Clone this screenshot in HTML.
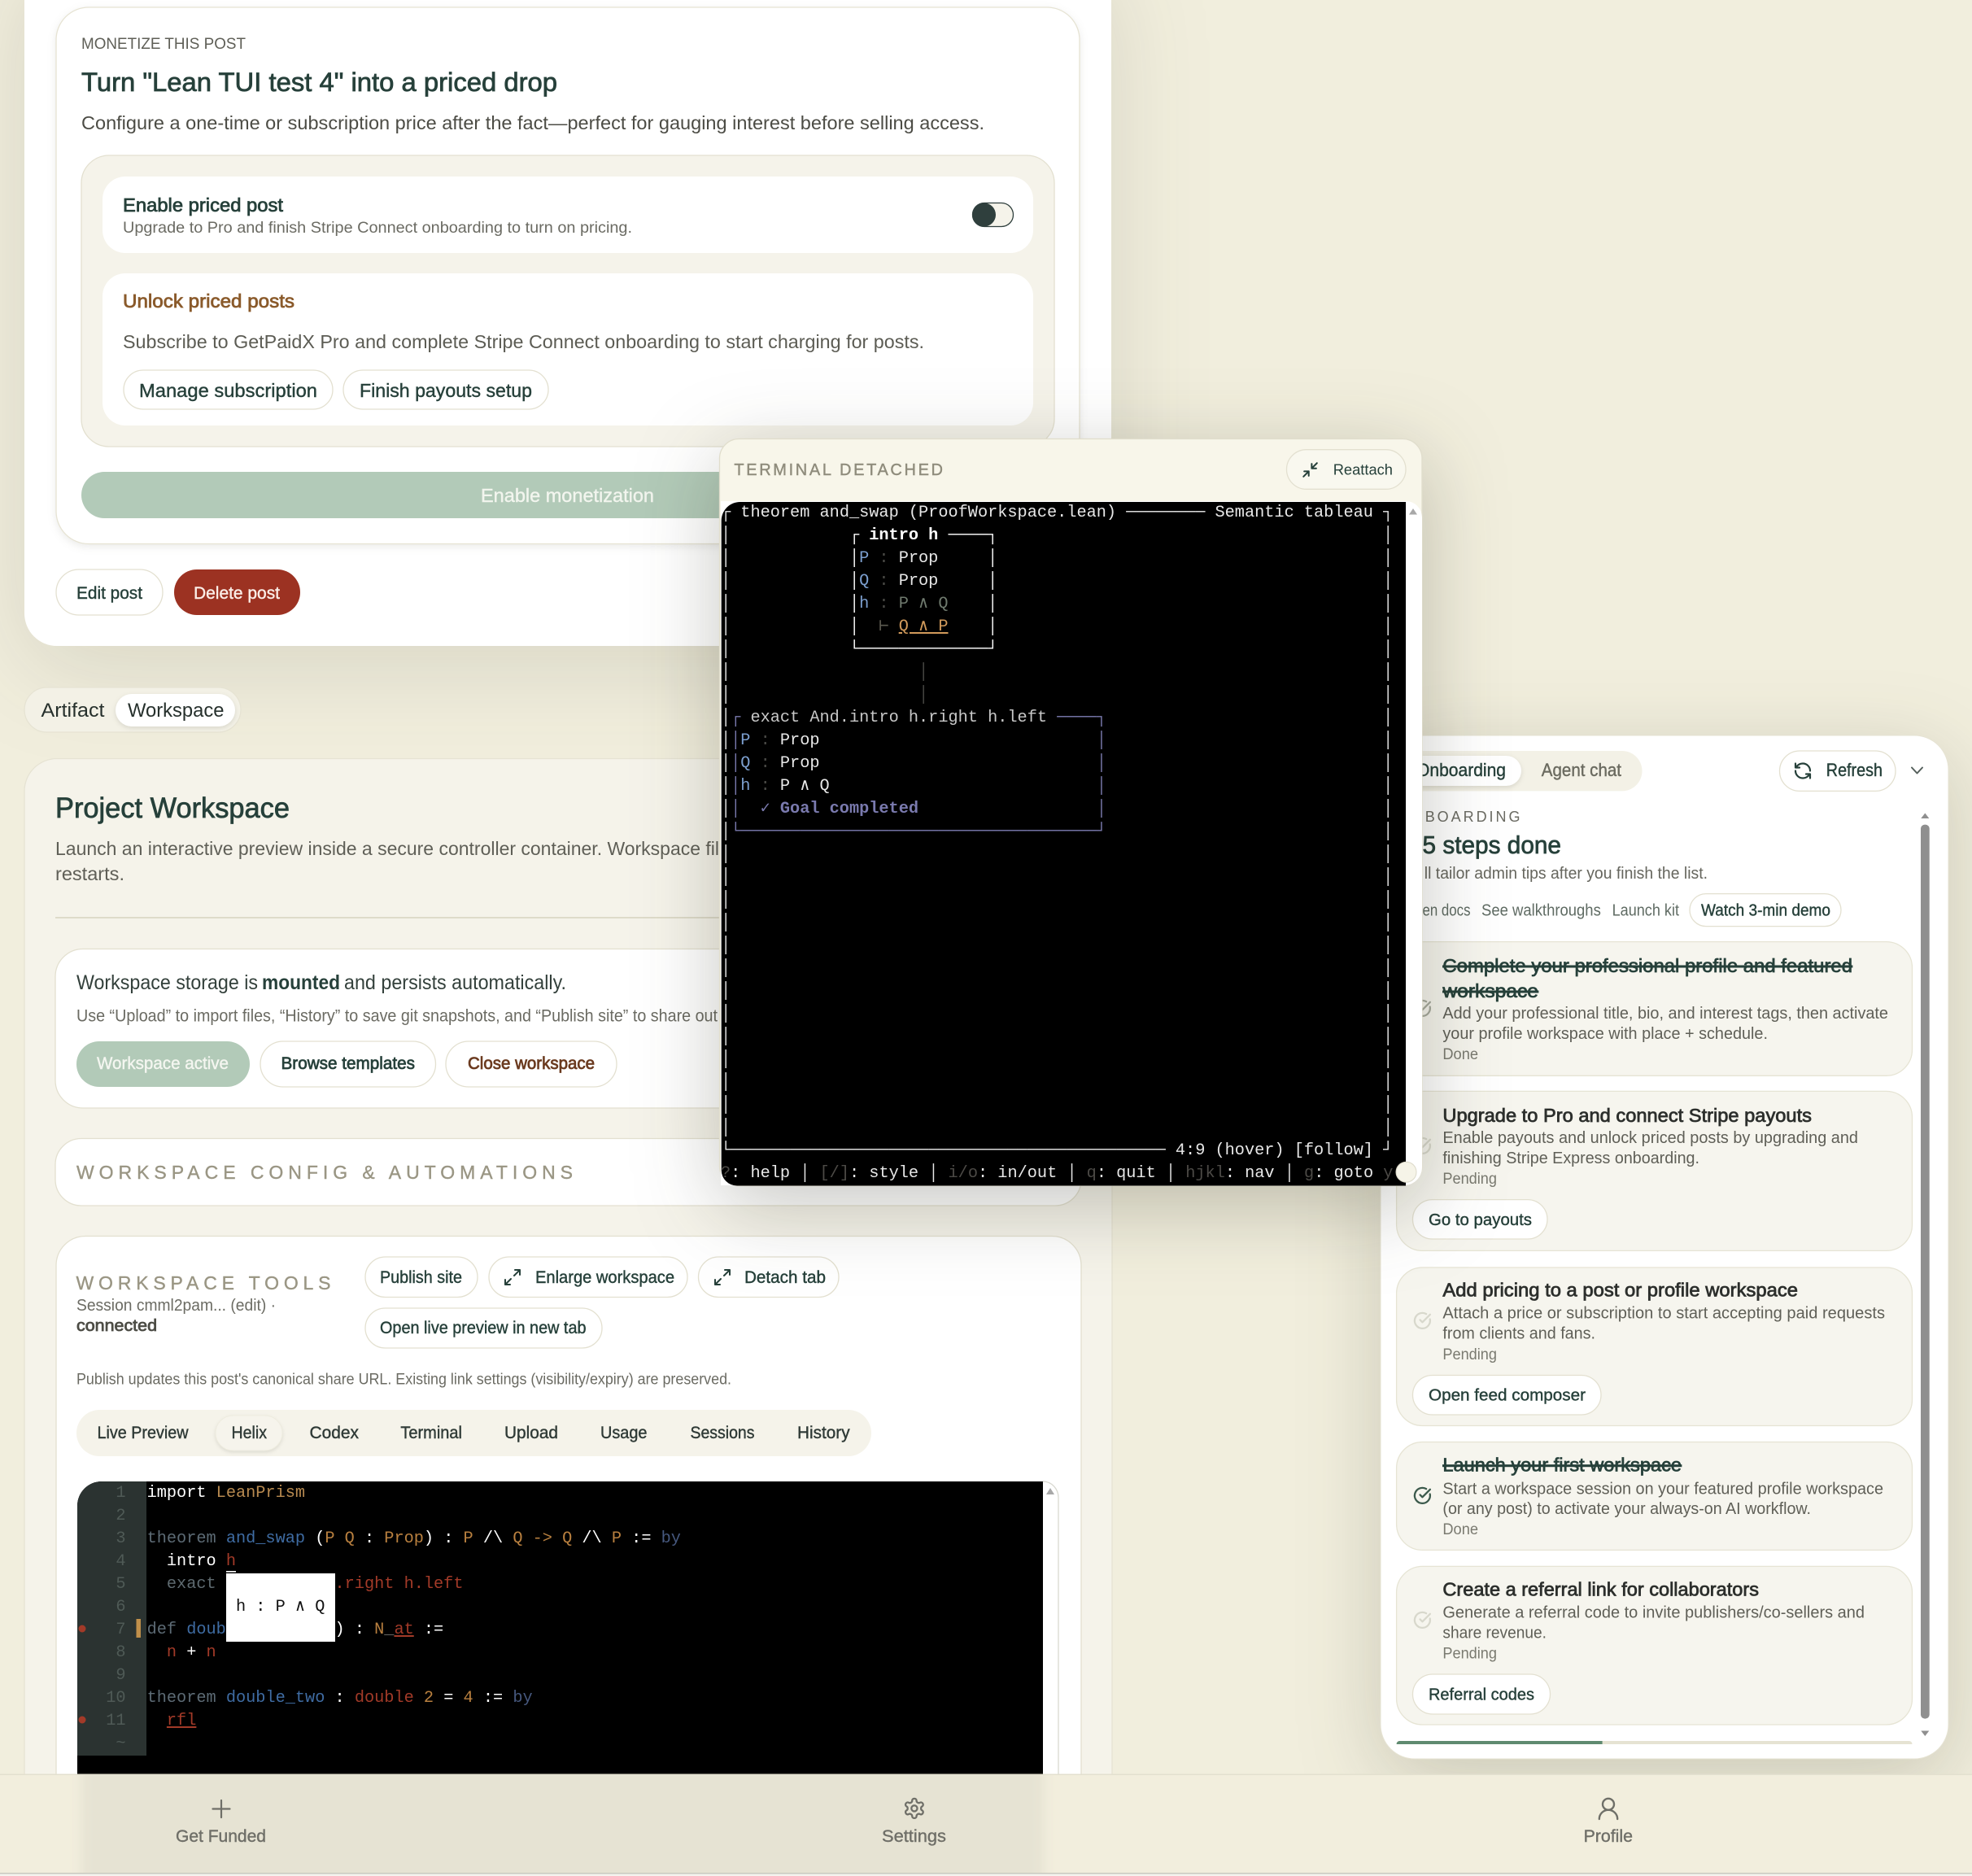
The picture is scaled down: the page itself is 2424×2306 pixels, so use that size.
<!DOCTYPE html>
<html lang="en"><head><meta charset="utf-8"><title>Project Workspace</title>
<style>
html,body{margin:0;padding:0;background:#f1eedd;width:2424px;height:2306px;overflow:hidden}
svg{display:block}
text{font-family:"Liberation Sans","DejaVu Sans",sans-serif;white-space:pre}
.m{stroke:currentColor;stroke-width:.4px}
.s{stroke:currentColor;stroke-width:.75px}
.g{color:#26403a;fill:#26403a}
.t,.t text,text.t{font-family:"Liberation Mono","DejaVu Sans Mono",monospace;font-size:20.25px;fill:#e8e8e8}
.w{fill:#fff}.o{fill:#b9803f}.y{fill:#b88a50}.b{fill:#3f6ca3}.r{fill:#a23a28}.k{fill:#5d6b75}.u{fill:#46587e}.e{fill:#5e6a70}
.l{fill:#7c9fcf}.d{fill:#4a4a46}.pu{fill:#7a7aae}.dim{fill:#4c4a46}
.ic{fill:none;stroke-linecap:round;stroke-linejoin:round}
.btn{fill:#fff;stroke:#e3e0d0;stroke-width:1.3}
.card{fill:#f6f5ee;stroke:#e6e4d4;stroke-width:1.3}
</style></head><body>
<svg xmlns="http://www.w3.org/2000/svg" width="2424" height="2306" viewBox="0 0 2424 2306">
<defs>
<clipPath id="nc"><rect x="0" y="2182" width="2424" height="120"/></clipPath>
<clipPath id="ec"><path d="M95 1851a30 30 0 0 1 30-30H1282V2190H95z"/></clipPath>
<clipPath id="tc"><path d="M886.7 640a23 23 0 0 1 23-23H1728V1457.5H906a19.3 19.3 0 0 1-19.3-19.3z"/></clipPath>
</defs>

<rect width="2424" height="2306" fill="#f1eedd"/>

<!-- post card -->
<rect x="30" y="-60" width="1336" height="854" rx="40" fill="#fff" style="filter:drop-shadow(0 26px 60px rgba(50,50,30,.13))"/>
<rect x="69" y="9" width="1258" height="659.5" rx="40" fill="#fff" stroke="#e6e3d3" stroke-width="1.3" style="filter:drop-shadow(0 3px 5px rgba(60,60,40,.1))"/>
<text x="100" y="60" font-size="19.5" fill="#5f5f57" textLength="202" lengthAdjust="spacingAndGlyphs">MONETIZE THIS POST</text>
<text x="100" y="112" font-size="32" class="s g" textLength="585" lengthAdjust="spacingAndGlyphs">Turn "Lean TUI test 4" into a priced drop</text>
<text x="100" y="159" font-size="23" fill="#4c4c45" textLength="1110" lengthAdjust="spacingAndGlyphs">Configure a one-time or subscription price after the fact—perfect for gauging interest before selling access.</text>
<rect x="100" y="191" width="1196" height="358" rx="34" fill="#f5f3ea" stroke="#e3e0d0" stroke-width="1.3"/>
<rect x="126" y="217" width="1144" height="94" rx="28" fill="#fff"/>
<text x="151" y="260" font-size="23" class="s g" textLength="197" lengthAdjust="spacingAndGlyphs">Enable priced post</text>
<text x="151" y="286" font-size="19.5" fill="#6b6b63" textLength="626" lengthAdjust="spacingAndGlyphs">Upgrade to Pro and finish Stripe Connect onboarding to turn on pricing.</text>
<rect x="1195.5" y="249.5" width="50" height="29" rx="14.5" fill="#f5f3ea" stroke="#2f3f3d" stroke-width="1.3"/>
<circle cx="1209.5" cy="264" r="14.5" fill="#2f3f3d"/>
<rect x="126" y="336" width="1144" height="187" rx="28" fill="#fff"/>
<text x="151" y="378" font-size="23" fill="#8a5a2b" style="color:#8a5a2b" class="s" textLength="211" lengthAdjust="spacingAndGlyphs">Unlock priced posts</text>
<text x="151" y="428" font-size="23" fill="#5c5c54" textLength="985" lengthAdjust="spacingAndGlyphs">Subscribe to GetPaidX Pro and complete Stripe Connect onboarding to start charging for posts.</text>
<rect x="152" y="455" width="257" height="48" rx="24" class="btn"/>
<text x="171" y="488" font-size="23" class="m g" textLength="219" lengthAdjust="spacingAndGlyphs">Manage subscription</text>
<rect x="422" y="455" width="252" height="48" rx="24" class="btn"/>
<text x="442" y="488" font-size="23" class="m g" textLength="212" lengthAdjust="spacingAndGlyphs">Finish payouts setup</text>
<rect x="100" y="580" width="1196" height="57" rx="28.5" fill="#b2cab8"/>
<text x="591" y="617" font-size="23" fill="#f2f5ee" style="color:#f2f5ee" class="m" textLength="213" lengthAdjust="spacingAndGlyphs">Enable monetization</text>
<rect x="69" y="700" width="131" height="56" rx="28" class="btn"/>
<text x="94" y="736" font-size="21" class="m g" textLength="81" lengthAdjust="spacingAndGlyphs">Edit post</text>
<rect x="214" y="700" width="155" height="56" rx="28" fill="#9c3222"/>
<text x="238" y="736" font-size="21" fill="#fbeee8" style="color:#fbeee8" class="m" textLength="106" lengthAdjust="spacingAndGlyphs">Delete post</text>

<!-- artifact / workspace tabs -->
<rect x="30" y="845" width="266" height="55" rx="27.5" fill="#f3f1e6" stroke="#e6e3d3" stroke-width="1.3"/>
<rect x="142" y="853" width="147" height="40" rx="20" fill="#fff" style="filter:drop-shadow(0 2px 3px rgba(60,60,40,.14))"/>
<text x="50.5" y="881" font-size="24" fill="#26302c" textLength="78" lengthAdjust="spacingAndGlyphs">Artifact</text>
<text x="157" y="881" font-size="24" fill="#26302c" textLength="118.5" lengthAdjust="spacingAndGlyphs">Workspace</text>

<!-- workspace card -->
<rect x="30" y="932.5" width="1337" height="1400" rx="40" fill="#f5f3ea" stroke="#e6e3d3" stroke-width="1.3"/>
<text x="68" y="1005" font-size="35" class="s g" textLength="288" lengthAdjust="spacingAndGlyphs">Project Workspace</text>
<text x="68" y="1051" font-size="23.5" fill="#5f5f57" textLength="816" lengthAdjust="spacingAndGlyphs">Launch an interactive preview inside a secure controller container. Workspace fil</text>
<text x="68" y="1082" font-size="23.5" fill="#5f5f57" textLength="85" lengthAdjust="spacingAndGlyphs">restarts.</text>
<rect x="68" y="1127" width="1261" height="2" fill="#dedbca"/>

<rect x="68" y="1166.5" width="1261" height="195.5" rx="34" fill="#fff" stroke="#e3e0d0" stroke-width="1.3"/>
<text x="94" y="1216" font-size="25" fill="#33403b" textLength="223" lengthAdjust="spacingAndGlyphs">Workspace storage is</text>
<text x="322" y="1216" font-size="25" font-weight="700" class="g" textLength="96" lengthAdjust="spacingAndGlyphs">mounted</text>
<text x="423" y="1216" font-size="25" fill="#33403b" textLength="273" lengthAdjust="spacingAndGlyphs">and persists automatically.</text>
<text x="94" y="1255.5" font-size="21" fill="#6b6b63" textLength="788" lengthAdjust="spacingAndGlyphs">Use “Upload” to import files, “History” to save git snapshots, and “Publish site” to share out</text>
<rect x="94" y="1280" width="213" height="56" rx="28" fill="#b2cab8"/>
<text x="119" y="1314" font-size="21.5" fill="#f4f6f0" style="color:#f4f6f0" class="m" textLength="162" lengthAdjust="spacingAndGlyphs">Workspace active</text>
<rect x="320" y="1280" width="215.5" height="56" rx="28" class="btn"/>
<text x="345.5" y="1314" font-size="21.5" class="s g" textLength="164.5" lengthAdjust="spacingAndGlyphs">Browse templates</text>
<rect x="548" y="1280" width="210" height="56" rx="28" class="btn"/>
<text x="575" y="1314" font-size="21.5" fill="#6b3a1f" style="color:#6b3a1f" class="s" textLength="156" lengthAdjust="spacingAndGlyphs">Close workspace</text>

<rect x="68" y="1399.5" width="1261" height="82.5" rx="32" fill="#fff" stroke="#e3e0d0" stroke-width="1.3"/>
<text x="94" y="1449" font-size="23" fill="#9a9684" style="color:#9a9684" class="m" textLength="610" lengthAdjust="spacing">WORKSPACE CONFIG &amp; AUTOMATIONS</text>

<!-- tools card -->
<rect x="69" y="1519.5" width="1260" height="800" rx="36" fill="#fff" stroke="#e3e0d0" stroke-width="1.3"/>
<text x="93.5" y="1585" font-size="23" fill="#9a9684" style="color:#9a9684" class="m" textLength="313" lengthAdjust="spacing">WORKSPACE TOOLS</text>
<text x="94" y="1611" font-size="20" fill="#6b6b63" textLength="245" lengthAdjust="spacingAndGlyphs">Session cmml2pam... (edit) ·</text>
<text x="94" y="1636" font-size="20" fill="#4c4c45" style="color:#4c4c45" class="s" textLength="99" lengthAdjust="spacingAndGlyphs">connected</text>
<rect x="449" y="1545" width="138" height="49.5" rx="24.7" class="btn"/>
<text x="467" y="1577" font-size="21" class="m g" textLength="101" lengthAdjust="spacingAndGlyphs">Publish site</text>
<rect x="601" y="1545" width="244" height="49.5" rx="24.7" class="btn"/>
<g transform="translate(618,1558)" class="ic" stroke="#26403a" stroke-width="2"><path d="M15 3h6v6M21 3l-7 7M3 21l7-7M9 21H3v-6"/></g>
<text x="658" y="1577" font-size="21" class="m g" textLength="171" lengthAdjust="spacingAndGlyphs">Enlarge workspace</text>
<rect x="858.5" y="1545" width="172.5" height="49.5" rx="24.7" class="btn"/>
<g transform="translate(876,1558)" class="ic" stroke="#26403a" stroke-width="2"><path d="M15 3h6v6M21 3l-7 7M3 21l7-7M9 21H3v-6"/></g>
<text x="915" y="1577" font-size="21" class="m g" textLength="100" lengthAdjust="spacingAndGlyphs">Detach tab</text>
<rect x="449" y="1608" width="291" height="49" rx="24.5" class="btn"/>
<text x="467" y="1639" font-size="21" class="m g" textLength="253.5" lengthAdjust="spacingAndGlyphs">Open live preview in new tab</text>
<text x="94" y="1701.5" font-size="19" fill="#6b6b63" textLength="805" lengthAdjust="spacingAndGlyphs">Publish updates this post's canonical share URL. Existing link settings (visibility/expiry) are preserved.</text>

<rect x="94" y="1733" width="977" height="57" rx="28.5" fill="#f5f3ea"/>
<rect x="265" y="1740" width="82" height="43" rx="21.5" fill="#f6f4ec" stroke="#eeecdf" style="filter:drop-shadow(0 2px 2px rgba(60,60,40,.12))"/>
<g font-size="21" fill="#2f3a36" style="color:#2f3a36">
<text class="m" x="119.5" y="1768" textLength="112" lengthAdjust="spacingAndGlyphs">Live Preview</text>
<text class="m" x="284.5" y="1768" textLength="43.5" lengthAdjust="spacingAndGlyphs">Helix</text>
<text class="m" x="380.5" y="1768" textLength="60.5" lengthAdjust="spacingAndGlyphs">Codex</text>
<text class="m" x="492.4" y="1768" textLength="75.6" lengthAdjust="spacingAndGlyphs">Terminal</text>
<text class="m" x="620" y="1768" textLength="66" lengthAdjust="spacingAndGlyphs">Upload</text>
<text class="m" x="738" y="1768" textLength="57.5" lengthAdjust="spacingAndGlyphs">Usage</text>
<text class="m" x="848.5" y="1768" textLength="79" lengthAdjust="spacingAndGlyphs">Sessions</text>
<text class="m" x="980" y="1768" textLength="64.6" lengthAdjust="spacingAndGlyphs">History</text>
</g>

<!-- editor -->
<path d="M1282 1821a19 20 0 0 1 19 20V2190" fill="#fff" stroke="#d8d8d0" stroke-width="1.3"/>
<path d="M1291 1829l5 8h-10z" fill="#a8a8a8"/>
<g clip-path="url(#ec)">
<rect x="95" y="1821" width="1187" height="369" fill="#000"/>
<rect x="95" y="1821" width="85" height="337" fill="#2b3331"/>
<g text-anchor="end">
<text class="t" x="154.5" y="1840" style="fill:#4f5a56">1</text>
<text class="t" x="154.5" y="1868" style="fill:#4f5a56">2</text>
<text class="t" x="154.5" y="1896" style="fill:#4f5a56">3</text>
<text class="t" x="154.5" y="1924" style="fill:#4f5a56">4</text>
<text class="t" x="154.5" y="1952" style="fill:#4f5a56">5</text>
<text class="t" x="154.5" y="1980" style="fill:#4f5a56">6</text>
<text class="t" x="154.5" y="2008" style="fill:#4f5a56">7</text>
<text class="t" x="154.5" y="2036" style="fill:#4f5a56">8</text>
<text class="t" x="154.5" y="2064" style="fill:#4f5a56">9</text>
<text class="t" x="154.5" y="2092" style="fill:#4f5a56">10</text>
<text class="t" x="154.5" y="2120" style="fill:#4f5a56">11</text>
<text class="t" x="154.5" y="2148" style="fill:#4f5a56">~</text>
</g>
<circle cx="101" cy="2002" r="4.5" fill="#a23a28"/>
<circle cx="101" cy="2114" r="4.5" fill="#a23a28"/>
<rect x="167.5" y="1990" width="5.5" height="23" fill="#c08f4a"/>
<g>
<text class="t" x="180.6" y="1840"><tspan class="w">import</tspan> <tspan class="y">LeanPrism</tspan></text>
<text class="t" x="180.6" y="1896"><tspan class="k">theorem</tspan> <tspan class="b">and_swap</tspan> <tspan class="w">(</tspan><tspan class="o">P Q</tspan> <tspan class="w">:</tspan> <tspan class="o">Prop</tspan><tspan class="w">) :</tspan> <tspan class="o">P</tspan> <tspan class="w">/\</tspan> <tspan class="o">Q -&gt; Q</tspan> <tspan class="w">/\</tspan> <tspan class="o">P</tspan> <tspan class="w">:=</tspan> <tspan class="u">by</tspan></text>
<text class="t" x="180.6" y="1924">  <tspan class="w">intro</tspan> <tspan class="r">h</tspan></text>
<text class="t" x="180.6" y="1952">  <tspan class="e">exact</tspan> <tspan class="r">And.intro h.right h.left</tspan></text>
<text class="t" x="180.6" y="2008"><tspan class="k">def</tspan> <tspan class="b">double</tspan> <tspan class="w">(n : Nat) :</tspan> <tspan class="o">N</tspan><tspan style="fill:#6a6a66">_</tspan><tspan class="r" text-decoration="underline">at</tspan> <tspan class="w">:=</tspan></text>
<text class="t" x="180.6" y="2036">  <tspan class="r">n</tspan> <tspan class="w">+</tspan> <tspan class="r">n</tspan></text>
<text class="t" x="180.6" y="2092"><tspan class="k">theorem</tspan> <tspan class="b">double_two</tspan> <tspan class="w">:</tspan> <tspan class="r">double</tspan> <tspan class="o">2</tspan> <tspan class="w">=</tspan> <tspan class="o">4</tspan> <tspan class="w">:=</tspan> <tspan class="u">by</tspan></text>
<text class="t" x="180.6" y="2120">  <tspan class="r" text-decoration="underline">rfl</tspan></text>
</g>
<rect x="278" y="1931" width="12" height="1.6" fill="#fff"/>
<rect x="278" y="1934" width="134" height="84" fill="#fff"/>
<text class="t" x="290" y="1980" style="fill:#111">h : P ∧ Q</text>
</g>

<!-- right panel -->
<rect x="1697" y="904" width="698" height="1258" rx="42" fill="#fff" stroke="#e6e3d3" stroke-width="1" style="filter:drop-shadow(0 24px 50px rgba(50,50,30,.2))"/>
<rect x="1700" y="923" width="318.5" height="49.4" rx="24.7" fill="#f3f1e6"/>
<rect x="1720" y="929" width="150" height="37" rx="18.5" fill="#fff" style="filter:drop-shadow(0 2px 3px rgba(60,60,40,.14))"/>
<text x="1741" y="954" font-size="22" class="m g" textLength="110" lengthAdjust="spacingAndGlyphs">Onboarding</text>
<text x="1894.8" y="954" font-size="22" fill="#6b6b60" style="color:#6b6b60" class="m" textLength="98.2" lengthAdjust="spacingAndGlyphs">Agent chat</text>
<rect x="2187.5" y="923" width="142.5" height="49.4" rx="24.7" class="btn"/>
<g transform="translate(2204,935.5)" class="ic" stroke="#26403a" stroke-width="2.2"><path d="M21 12a9 9 0 0 0-9-9 9.75 9.75 0 0 0-6.74 2.74L3 8M3 3v5h5M3 12a9 9 0 0 0 9 9 9.75 9.75 0 0 0 6.74-2.74L21 16M16 16h5v5"/></g>
<text x="2244.8" y="954" font-size="22" class="m g" textLength="69.2" lengthAdjust="spacingAndGlyphs">Refresh</text>
<path d="M2350 943.5l6.500 7 6.500-7" class="ic" stroke="#55605c" stroke-width="2"/>
<text x="1720" y="1010" font-size="18" fill="#6b6b63">ON</text>
<text x="1751.7" y="1010" font-size="18" fill="#6b6b63" textLength="116.8" lengthAdjust="spacing">BOARDING</text>
<text x="1748.5" y="1049" font-size="31" class="s g" textLength="170.5" lengthAdjust="spacingAndGlyphs">5 steps done</text>
<text x="1750.8" y="1080" font-size="20" fill="#66665e" textLength="348.2" lengthAdjust="spacingAndGlyphs">ll tailor admin tips after you finish the list.</text>
<text x="1748.5" y="1125.5" font-size="20" fill="#5f6b63" textLength="59" lengthAdjust="spacingAndGlyphs">en docs</text>
<text x="1821" y="1125.5" font-size="20" fill="#5f6b63" textLength="146.8" lengthAdjust="spacingAndGlyphs">See walkthroughs</text>
<text x="1981.6" y="1125.5" font-size="20" fill="#5f6b63" textLength="82.4" lengthAdjust="spacingAndGlyphs">Launch kit</text>
<rect x="2077" y="1098.6" width="186" height="40" rx="20" class="btn"/>
<text x="2091" y="1125.5" font-size="20" class="m g" textLength="159" lengthAdjust="spacingAndGlyphs">Watch 3-min demo</text>

<rect x="2361" y="1013.6" width="10.7" height="1099" rx="5" fill="#8f8f8f"/>
<path d="M2366.3 999.5l5 6.500h-10z" fill="#8f8f8f"/>
<path d="M2366.3 2134l5-6.500h-10z" fill="#8f8f8f"/>

<!-- card 1 -->
<rect x="1716.6" y="1157.6" width="633.9" height="164.7" rx="32" class="card"/>
<g transform="translate(1737,1228) scale(.95)" class="ic" stroke="#a8ab9e" stroke-width="2.4"><path d="M21.801 10A10 10 0 1 1 17 3.335M9 11l3 3L22 4"/></g>
<text x="1773.4" y="1195" font-size="23" class="s g" text-decoration="line-through" textLength="503.6" lengthAdjust="spacingAndGlyphs">Complete your professional profile and featured</text>
<text x="1773.4" y="1226" font-size="23" class="s g" text-decoration="line-through" textLength="117.6" lengthAdjust="spacingAndGlyphs">workspace</text>
<text x="1773.4" y="1252" font-size="20.5" fill="#5f5f57" textLength="547.6" lengthAdjust="spacingAndGlyphs">Add your professional title, bio, and interest tags, then activate</text>
<text x="1773.4" y="1277" font-size="20.5" fill="#5f5f57" textLength="399.6" lengthAdjust="spacingAndGlyphs">your profile workspace with place + schedule.</text>
<text x="1773.4" y="1302" font-size="19" fill="#7a7a70" textLength="43.6" lengthAdjust="spacingAndGlyphs">Done</text>

<!-- card 2 -->
<rect x="1716.6" y="1341.4" width="633.9" height="196" rx="32" class="card"/>
<g transform="translate(1737,1397) scale(.95)" class="ic" stroke="#d8d8cc" stroke-width="2.4"><path d="M21.801 10A10 10 0 1 1 17 3.335M9 11l3 3L22 4"/></g>
<text x="1773.4" y="1379" font-size="23" fill="#2c2f2c" style="color:#2c2f2c" class="s" textLength="453.6" lengthAdjust="spacingAndGlyphs">Upgrade to Pro and connect Stripe payouts</text>
<text x="1773.4" y="1405" font-size="20.5" fill="#5f5f57" textLength="510.6" lengthAdjust="spacingAndGlyphs">Enable payouts and unlock priced posts by upgrading and</text>
<text x="1773.4" y="1430" font-size="20.5" fill="#5f5f57" textLength="315.6" lengthAdjust="spacingAndGlyphs">finishing Stripe Express onboarding.</text>
<text x="1773.4" y="1455" font-size="19" fill="#7a7a70" textLength="66.6" lengthAdjust="spacingAndGlyphs">Pending</text>
<rect x="1736.5" y="1474.6" width="165.5" height="48.4" rx="24.2" class="btn"/>
<text x="1756" y="1506" font-size="20.5" class="m g" textLength="127" lengthAdjust="spacingAndGlyphs">Go to payouts</text>

<!-- card 3 -->
<rect x="1716.6" y="1558" width="633.9" height="194.5" rx="32" class="card"/>
<g transform="translate(1737,1612) scale(.95)" class="ic" stroke="#d8d8cc" stroke-width="2.4"><path d="M21.801 10A10 10 0 1 1 17 3.335M9 11l3 3L22 4"/></g>
<text x="1773.4" y="1593.7" font-size="23" fill="#2c2f2c" style="color:#2c2f2c" class="s" textLength="436.6" lengthAdjust="spacingAndGlyphs">Add pricing to a post or profile workspace</text>
<text x="1773.4" y="1620.6" font-size="20.5" fill="#5f5f57" textLength="543.6" lengthAdjust="spacingAndGlyphs">Attach a price or subscription to start accepting paid requests</text>
<text x="1773.4" y="1645.5" font-size="20.5" fill="#5f5f57" textLength="187.6" lengthAdjust="spacingAndGlyphs">from clients and fans.</text>
<text x="1773.4" y="1671" font-size="19" fill="#7a7a70" textLength="66.6" lengthAdjust="spacingAndGlyphs">Pending</text>
<rect x="1736.5" y="1690.5" width="231.5" height="48.5" rx="24.2" class="btn"/>
<text x="1756" y="1721.5" font-size="20.5" class="m g" textLength="193" lengthAdjust="spacingAndGlyphs">Open feed composer</text>

<!-- card 4 -->
<rect x="1716.6" y="1772.5" width="633.9" height="132.9" rx="32" class="card"/>
<g transform="translate(1737,1827) scale(.95)" class="ic" stroke="#3c5a4c" stroke-width="2.4"><path d="M21.801 10A10 10 0 1 1 17 3.335M9 11l3 3L22 4"/></g>
<text x="1773.4" y="1808.7" font-size="23" class="s g" text-decoration="line-through" textLength="293.6" lengthAdjust="spacingAndGlyphs">Launch your first workspace</text>
<text x="1773.4" y="1836.5" font-size="20.5" fill="#5f5f57" textLength="541.6" lengthAdjust="spacingAndGlyphs">Start a workspace session on your featured profile workspace</text>
<text x="1773.4" y="1861" font-size="20.5" fill="#5f5f57" textLength="452.6" lengthAdjust="spacingAndGlyphs">(or any post) to activate your always-on AI workflow.</text>
<text x="1773.4" y="1886" font-size="19" fill="#7a7a70" textLength="43.6" lengthAdjust="spacingAndGlyphs">Done</text>

<!-- card 5 -->
<rect x="1716.6" y="1925.4" width="633.9" height="194.6" rx="32" class="card"/>
<g transform="translate(1737,1980) scale(.95)" class="ic" stroke="#d8d8cc" stroke-width="2.4"><path d="M21.801 10A10 10 0 1 1 17 3.335M9 11l3 3L22 4"/></g>
<text x="1773.4" y="1961.6" font-size="23" fill="#2c2f2c" style="color:#2c2f2c" class="s" textLength="388.6" lengthAdjust="spacingAndGlyphs">Create a referral link for collaborators</text>
<text x="1773.4" y="1988.5" font-size="20.5" fill="#5f5f57" textLength="518.6" lengthAdjust="spacingAndGlyphs">Generate a referral code to invite publishers/co-sellers and</text>
<text x="1773.4" y="2013.4" font-size="20.5" fill="#5f5f57" textLength="127.6" lengthAdjust="spacingAndGlyphs">share revenue.</text>
<text x="1773.4" y="2038.3" font-size="19" fill="#7a7a70" textLength="66.6" lengthAdjust="spacingAndGlyphs">Pending</text>
<rect x="1736.5" y="2058" width="169" height="49" rx="24.5" class="btn"/>
<text x="1756" y="2089.6" font-size="20.5" class="m g" textLength="130" lengthAdjust="spacingAndGlyphs">Referral codes</text>

<path d="M1716.6 2144a4 4 0 0 1 4-4H2346.5a4 4 0 0 1 4 4z" fill="#e6e3d3"/>
<path d="M1716.6 2144a4 4 0 0 1 4-4H1969.6v4z" fill="#5f8a70"/>

<!-- detached terminal -->
<rect x="884.5" y="539.5" width="863.5" height="918" rx="24" fill="#f8f6ea" stroke="#e0ddcc" stroke-width="1.3" style="filter:drop-shadow(0 24px 50px rgba(40,40,25,.26))"/>
<text x="902.4" y="584" font-size="20" fill="#8f8c7c" style="color:#8f8c7c" class="m" textLength="256.6" lengthAdjust="spacing">TERMINAL DETACHED</text>
<rect x="1581.5" y="552.7" width="146.5" height="48.6" rx="24.3" fill="#f9f8ef" stroke="#e3e0d0" stroke-width="1.3"/>
<g transform="translate(1599.5,566.5) scale(.92)" class="ic" stroke="#26403a" stroke-width="2.2"><path d="M14 10l7-7M20 10h-6V4M3 21l7-7M4 14h6v6"/></g>
<text x="1638.7" y="583.4" font-size="18.5" class="g" textLength="73.3" lengthAdjust="spacingAndGlyphs">Reattach</text>
<path d="M886 616h842a20 20 0 0 1 20 20v799a22 22 0 0 1-22 22H886z" fill="#fff"/>
<path d="M1737 625l5 7.500h-10z" fill="#a8a8a8"/>
<g clip-path="url(#tc)">
<rect x="886" y="616" width="842" height="842" fill="#000"/>
<g>
<text class="t" y="635"><tspan x="886">┌</tspan><tspan x="910.3">theorem and_swap (ProofWorkspace.lean)</tspan><tspan x="1384.15">────────</tspan><tspan x="1493.5">Semantic tableau</tspan><tspan x="1700.05">┐</tspan></text>
<text class="t" y="663"><tspan x="886">│</tspan><tspan x="1043.95" class="w">┌</tspan><tspan x="1068.25" class="w" font-weight="700">intro h</tspan><tspan x="1165.45" class="w">────┐</tspan><tspan x="1700.05">│</tspan></text>
<text class="t" y="691"><tspan x="886">│</tspan><tspan x="1043.95" class="w">│</tspan><tspan x="1056.1" class="l">P</tspan><tspan x="1080.4" class="d">:</tspan><tspan x="1104.7">Prop</tspan><tspan x="1214.05" class="w">│</tspan><tspan x="1700.05">│</tspan></text>
<text class="t" y="719"><tspan x="886">│</tspan><tspan x="1043.95" class="w">│</tspan><tspan x="1056.1" class="l">Q</tspan><tspan x="1080.4" class="d">:</tspan><tspan x="1104.7">Prop</tspan><tspan x="1214.05" class="w">│</tspan><tspan x="1700.05">│</tspan></text>
<text class="t" y="747"><tspan x="886">│</tspan><tspan x="1043.95" class="w">│</tspan><tspan x="1056.1" class="l">h</tspan><tspan x="1080.4" class="d">:</tspan><tspan x="1104.7" style="fill:#6f7a6e">P ∧ Q</tspan><tspan x="1214.05" class="w">│</tspan><tspan x="1700.05">│</tspan></text>
<text class="t" y="775"><tspan x="886">│</tspan><tspan x="1043.95" class="w">│</tspan><tspan x="1080.4" style="fill:#5c5a50">⊢</tspan><tspan x="1104.7" style="fill:#d19a5b" text-decoration="underline">Q ∧ P</tspan><tspan x="1214.05" class="w">│</tspan><tspan x="1700.05">│</tspan></text>
<text class="t" y="803"><tspan x="886">│</tspan><tspan x="1043.95" class="w">└─────────────┘</tspan><tspan x="1700.05">│</tspan></text>
<text class="t" y="831"><tspan x="886">│</tspan><tspan x="1129" class="d">│</tspan><tspan x="1700.05">│</tspan></text>
<text class="t" y="859"><tspan x="886">│</tspan><tspan x="1129" class="d">│</tspan><tspan x="1700.05">│</tspan></text>
<text class="t" y="887"><tspan x="886">│</tspan><tspan x="898.15" class="pu">┌</tspan><tspan x="922.45" style="fill:#c8c8c8">exact And.intro h.right h.left</tspan><tspan x="1299.1" class="pu">────┐</tspan><tspan x="1700.05">│</tspan></text>
<text class="t" y="915"><tspan x="886">│</tspan><tspan x="898.15" class="pu">│</tspan><tspan x="910.3" class="l">P</tspan><tspan x="934.6" class="d">:</tspan><tspan x="958.9">Prop</tspan><tspan x="1347.7" class="pu">│</tspan><tspan x="1700.05">│</tspan></text>
<text class="t" y="943"><tspan x="886">│</tspan><tspan x="898.15" class="pu">│</tspan><tspan x="910.3" class="l">Q</tspan><tspan x="934.6" class="d">:</tspan><tspan x="958.9">Prop</tspan><tspan x="1347.7" class="pu">│</tspan><tspan x="1700.05">│</tspan></text>
<text class="t" y="971"><tspan x="886">│</tspan><tspan x="898.15" class="pu">│</tspan><tspan x="910.3" class="l">h</tspan><tspan x="934.6" class="d">:</tspan><tspan x="958.9">P ∧ Q</tspan><tspan x="1347.7" class="pu">│</tspan><tspan x="1700.05">│</tspan></text>
<text class="t" y="999"><tspan x="886">│</tspan><tspan x="898.15" class="pu">│</tspan><tspan x="934.6" class="pu">✓</tspan><tspan x="958.9" class="pu" font-weight="700">Goal completed</tspan><tspan x="1347.7" class="pu">│</tspan><tspan x="1700.05">│</tspan></text>
<text class="t" y="1027"><tspan x="886">│</tspan><tspan x="898.15" class="pu">└────────────────────────────────────┘</tspan><tspan x="1700.05">│</tspan></text>
<text class="t" y="1055"><tspan x="886">│</tspan><tspan x="1700.05">│</tspan></text>
<text class="t" y="1083"><tspan x="886">│</tspan><tspan x="1700.05">│</tspan></text>
<text class="t" y="1111"><tspan x="886">│</tspan><tspan x="1700.05">│</tspan></text>
<text class="t" y="1139"><tspan x="886">│</tspan><tspan x="1700.05">│</tspan></text>
<text class="t" y="1167"><tspan x="886">│</tspan><tspan x="1700.05">│</tspan></text>
<text class="t" y="1195"><tspan x="886">│</tspan><tspan x="1700.05">│</tspan></text>
<text class="t" y="1223"><tspan x="886">│</tspan><tspan x="1700.05">│</tspan></text>
<text class="t" y="1251"><tspan x="886">│</tspan><tspan x="1700.05">│</tspan></text>
<text class="t" y="1279"><tspan x="886">│</tspan><tspan x="1700.05">│</tspan></text>
<text class="t" y="1307"><tspan x="886">│</tspan><tspan x="1700.05">│</tspan></text>
<text class="t" y="1335"><tspan x="886">│</tspan><tspan x="1700.05">│</tspan></text>
<text class="t" y="1363"><tspan x="886">│</tspan><tspan x="1700.05">│</tspan></text>
<text class="t" y="1391"><tspan x="886">│</tspan><tspan x="1700.05">│</tspan></text>
<text class="t" y="1419"><tspan x="886">└────────────────────────────────────────────</tspan><tspan x="1444.9">4:9 (hover) [follow]</tspan><tspan x="1700.05">┘</tspan></text>
<text class="t" x="886" y="1447"><tspan class="dim">?</tspan>: help │ <tspan class="dim">[/]</tspan>: style │ <tspan class="dim">i/o</tspan>: in/out │ <tspan class="dim">q</tspan>: quit │ <tspan class="dim">hjkl</tspan>: nav │ <tspan class="dim">g</tspan>: goto <tspan class="dim">y</tspan></text>
</g>
</g>
<circle cx="1728.5" cy="1440.7" r="12.5" fill="#f6f4e8" stroke="#dcd9c9"/>

<!-- bottom nav -->
<rect x="0" y="2181" width="2424" height="121" fill="#f2eedd"/>
<g clip-path="url(#nc)"><rect x="100" y="2170" width="1183" height="150" fill="#e6e3d3" style="filter:blur(6px)"/></g>
<rect x="0" y="2180.5" width="2424" height="1.5" fill="#e3e0cf"/>
<rect x="0" y="2302" width="2424" height="1.5" fill="#c9c9bf"/>
<rect x="0" y="2303.5" width="2424" height="2.5" fill="#f4f3ee"/>
<path d="M272 2213v21M261.500 2223.500h21" class="ic" stroke="#6f6f68" stroke-width="2.2"/>
<text x="216" y="2264" font-size="21" fill="#6f6f68" style="color:#6f6f68" class="m" textLength="111" lengthAdjust="spacingAndGlyphs">Get Funded</text>
<g transform="translate(1109.5,2208.5) scale(1.2)" class="ic" stroke="#6f6f68" stroke-width="1.9"><path d="M12.22 2h-.44a2 2 0 0 0-2 2v.18a2 2 0 0 1-1 1.73l-.43.25a2 2 0 0 1-2 0l-.15-.08a2 2 0 0 0-2.73.73l-.22.38a2 2 0 0 0 .73 2.73l.15.1a2 2 0 0 1 1 1.72v.51a2 2 0 0 1-1 1.74l-.15.09a2 2 0 0 0-.73 2.73l.22.38a2 2 0 0 0 2.73.73l.15-.08a2 2 0 0 1 2 0l.43.25a2 2 0 0 1 1 1.73V20a2 2 0 0 0 2 2h.44a2 2 0 0 0 2-2v-.18a2 2 0 0 1 1-1.73l.43-.25a2 2 0 0 1 2 0l.15.08a2 2 0 0 0 2.73-.73l.22-.39a2 2 0 0 0-.73-2.73l-.15-.08a2 2 0 0 1-1-1.74v-.5a2 2 0 0 1 1-1.74l.15-.09a2 2 0 0 0 .73-2.73l-.22-.38a2 2 0 0 0-2.73-.73l-.15.08a2 2 0 0 1-2 0l-.43-.25a2 2 0 0 1-1-1.73V4a2 2 0 0 0-2-2z"/><circle cx="12" cy="12" r="3"/></g>
<text x="1084" y="2264" font-size="21" fill="#6f6f68" style="color:#6f6f68" class="m" textLength="79" lengthAdjust="spacingAndGlyphs">Settings</text>
<g transform="translate(1960.2,2206.6) scale(1.4)" class="ic" stroke="#6f6f68" stroke-width="1.7"><path d="M20 21a8 8 0 0 0-16 0"/><circle cx="12" cy="8" r="5"/></g>
<text x="1946.6" y="2264" font-size="21" fill="#6f6f68" style="color:#6f6f68" class="m" textLength="60.4" lengthAdjust="spacingAndGlyphs">Profile</text>
</svg>
</body></html>
